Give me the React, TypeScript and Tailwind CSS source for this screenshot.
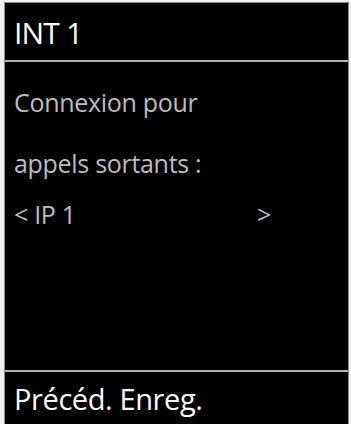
export default function App() {
  const font = { fontFamily: '"Open Sans", "Noto Sans", sans-serif' };
  return (
    <div className="w-[351px] h-[424px] bg-[#f0f0f0] pl-[4px] pt-[2px] pr-[2px] overflow-hidden" style={font}>
      <div className="flex flex-col h-full bg-black border-l border-t border-r border-[#8a8a8a]">
        {/* Title */}
        <div className="h-[57px] shrink-0 flex items-center pl-[9px] pt-[2px]">
          <span className="text-[30px] leading-none text-white tracking-[-0.8px]">INT 1</span>
        </div>
        <div className="h-[2px] shrink-0 bg-[#b0b0b0]" />

        {/* Body */}
        <div className="flex-1 flex flex-col pl-[9px] pt-[28px] text-[25px] leading-none text-[#bdbdbd] tracking-[-0.3px]">
          <div>Connexion pour</div>
          <div className="mt-[36px]">appels sortants :</div>
          <div className="mt-[26px] flex">
            <span className="w-[243px]">&lt; IP 1</span>
            <span>&gt;</span>
          </div>
        </div>

        <div className="h-[2px] shrink-0 bg-[#b0b0b0]" />
        {/* Softkeys */}
        <div className="h-[52px] shrink-0 flex items-center pl-[9px]">
          <span className="text-[29px] leading-none text-white tracking-[-0.4px]">Précéd. Enreg.</span>
        </div>
      </div>
    </div>
  );
}
